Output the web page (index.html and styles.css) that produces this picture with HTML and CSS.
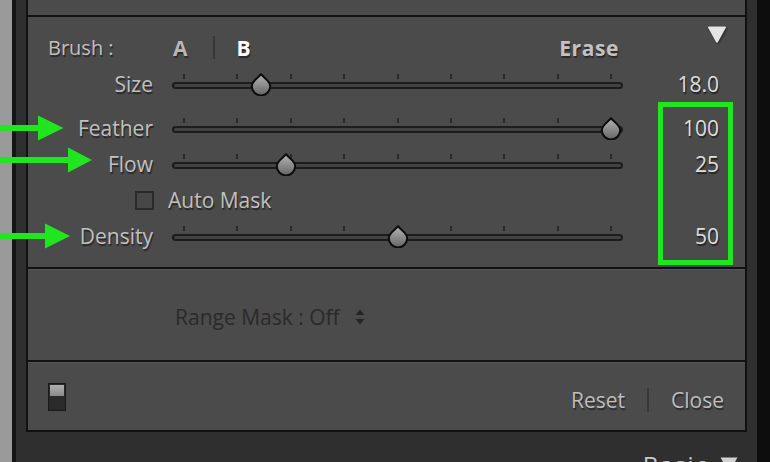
FILE: index.html
```html
<!DOCTYPE html>
<html>
<head>
<meta charset="utf-8">
<title>Brush panel</title>
<link rel="stylesheet" href="styles.css">
</head>
<body>
<div class="screen">
  <div class="edge-light"></div>
  <div class="edge-dark"></div>
  <div class="workspace">
    <div class="panel">
      <div class="section section-top"></div>

      <div class="section brush">
        <div class="brush-head">
          <span class="brush-title">Brush :</span>
          <span class="tab">A</span>
          <span class="tab-sep"></span>
          <span class="tab active">B</span>
          <span class="erase">Erase</span>
          <svg class="disclosure" viewBox="0 0 20 19" width="20" height="19"><path d="M2 1.5 H18 Q19.5 1.5 18.7 3 L11 17 Q10 18.5 9 17 L1.3 3 Q0.5 1.5 2 1.5 Z" fill="#e4e4e4"/></svg>
        </div>

        <div class="row">
          <span class="label">Size</span>
          <div class="slider" style="--v:0.18">
            <div class="ticks"><i></i><i></i><i></i><i></i><i></i><i></i><i></i><i></i><i></i></div>
            <div class="track"></div>
            <svg class="thumb" viewBox="0 0 22 23" width="22" height="23"><use href="#drop"/></svg>
          </div>
          <span class="value">18.0</span>
        </div>

        <div class="row row-feather">
          <span class="label">Feather</span>
          <div class="slider" style="--v:1">
            <div class="ticks"><i></i><i></i><i></i><i></i><i></i><i></i><i></i><i></i><i></i></div>
            <div class="track"></div>
            <svg class="thumb" viewBox="0 0 22 23" width="22" height="23"><use href="#drop"/></svg>
          </div>
          <span class="value">100</span>
        </div>

        <div class="row">
          <span class="label">Flow</span>
          <div class="slider" style="--v:0.24">
            <div class="ticks"><i></i><i></i><i></i><i></i><i></i><i></i><i></i><i></i><i></i></div>
            <div class="track"></div>
            <svg class="thumb" viewBox="0 0 22 23" width="22" height="23"><use href="#drop"/></svg>
          </div>
          <span class="value">25</span>
        </div>

        <div class="check-row">
          <span class="checkbox"></span>
          <span class="check-label">Auto Mask</span>
        </div>

        <div class="row">
          <span class="label">Density</span>
          <div class="slider" style="--v:0.5">
            <div class="ticks"><i></i><i></i><i></i><i></i><i></i><i></i><i></i><i></i><i></i></div>
            <div class="track"></div>
            <svg class="thumb" viewBox="0 0 22 23" width="22" height="23"><use href="#drop"/></svg>
          </div>
          <span class="value">50</span>
        </div>
      </div>

      <div class="section range">
        <span class="range-text">Range Mask : Off</span>
        <svg class="updown" viewBox="0 0 10 16" width="10" height="16"><path d="M5 0.5 L9.5 6 H0.5 Z M5 15.5 L9.5 10 H0.5 Z" fill="#262626"/></svg>
      </div>

      <div class="section footer">
        <span class="toggle"><span class="toggle-top"></span></span>
        <div class="actions">
          <span class="action">Reset</span>
          <span class="action-sep"></span>
          <span class="action">Close</span>
        </div>
      </div>
    </div>

    <div class="next-head">
      <span class="next-title">Basic</span>
      <svg class="next-tri" viewBox="0 0 18 16" width="18" height="16"><path d="M0.5 0.5 H17.5 L9 15.5 Z" fill="#d2d2d2"/></svg>
    </div>
  </div>

  <svg class="arrows" viewBox="0 0 100 260" width="100" height="260">
    <rect x="0" y="125" width="40" height="6" fill="#1fe61f"/>
    <polygon points="38,115.5 63.5,128 38,140.5" fill="#1fe61f"/>
    <rect x="0" y="157" width="70" height="6" fill="#1fe61f"/>
    <polygon points="68,147.5 92,160 68,172.5" fill="#1fe61f"/>
    <rect x="0" y="233" width="47" height="6" fill="#1fe61f"/>
    <polygon points="45,223.5 70,236 45,248.5" fill="#1fe61f"/>
  </svg>
  <div class="value-box"></div>
</div>

<svg width="0" height="0" class="defs">
  <defs>
    <linearGradient id="dropfill" x1="0" y1="0" x2="0" y2="1">
      <stop offset="0" stop-color="#b4b4b4"/>
      <stop offset="1" stop-color="#666666"/>
    </linearGradient>
    <symbol id="drop" viewBox="0 0 22 23">
      <path d="M11 1.2 C13.5 4.5 20.2 7.8 20.2 13.2 A9.2 9.2 0 0 1 1.8 13.2 C1.8 7.8 8.5 4.5 11 1.2 Z" fill="url(#dropfill)" stroke="#0c0c0c" stroke-width="2" stroke-linejoin="round"/>
    </symbol>
  </defs>
</svg>
</body>
</html>
```

FILE: styles.css
```css
* { box-sizing: border-box; }
html, body { margin: 0; padding: 0; }
body {
  width: 770px;
  height: 462px;
  overflow: hidden;
  background: #0d0d0d;
  font-family: "Open Sans", "DejaVu Sans", sans-serif;
}
.defs { position: absolute; width: 0; height: 0; }

.screen { position: relative; display: flex; height: 462px; overflow: hidden; }
.edge-light { width: 12px; flex: none; background: #9a9a9a; }
.edge-dark { width: 4px; flex: none; background: #151515; }
.workspace { width: 741px; flex: none; background: #2f2f2f; padding: 0 10px; }

.panel {
  background: #4b4b4b;
  border-left: 2px solid #111;
  border-right: 2px solid #111;
}
.section { border-bottom: 2px solid #111; }
.section-top { height: 17px; }

/* Brush section */
.brush { padding: 12px 0 13px; }
.brush-head {
  display: flex;
  align-items: center;
  height: 37px;
  padding: 0 18px 0 20px;
}
.brush-title {
  width: 125px;
  font-size: 20px;
  color: #c0c0c0;
  text-shadow: 1px 2px 1px rgba(0,0,0,0.5);
}
.tab {
  font-size: 21px;
  font-weight: 700;
  color: #b8b8b8;
  text-shadow: 1px 2px 1px rgba(0,0,0,0.45);
}
.tab.active { color: #ffffff; }
.tab-sep {
  width: 2px;
  height: 23px;
  background: #363636;
  margin: 0 22px 0 25px;
}
.erase {
  margin-left: auto;
  font-size: 21px;
  font-weight: 700;
  letter-spacing: 0.6px;
  color: #c2c2c2;
  text-shadow: 1px 2px 1px rgba(0,0,0,0.45);
}
.disclosure {
  align-self: flex-start;
  margin: -4px 0 0 88px;
  filter: drop-shadow(1px 1px 1px rgba(0,0,0,0.5));
}

.row {
  display: grid;
  grid-template-columns: 144px 451px 1fr;
  align-items: center;
  height: 36px;
}
.row-feather { margin-top: 8px; }
.label {
  padding-right: 19px;
  text-align: right;
  font-size: 21px;
  color: #c0c0c0;
  text-shadow: 1px 2px 1px rgba(0,0,0,0.5);
}
.value {
  padding-right: 26px;
  text-align: right;
  font-size: 21px;
  color: #dedede;
  text-shadow: 1px 2px 1px rgba(0,0,0,0.55);
}

.slider { position: relative; height: 20px; }
.ticks {
  display: flex;
  justify-content: space-between;
  height: 5px;
  padding: 0 11px;
}
.ticks i { display: block; width: 2px; height: 5px; background: #2a2a2a; }
.track {
  margin-top: 3px;
  height: 7px;
  border: 2px solid #1c1c1c;
  border-radius: 4px;
  background: #424242;
}
.thumb {
  position: absolute;
  top: -1px;
  left: calc(12px + 427px * var(--v) - 11px);
}

.check-row {
  display: flex;
  align-items: center;
  height: 36px;
  padding-left: 107px;
}
.checkbox {
  width: 19px;
  height: 19px;
  border: 2px solid #2a2a2a;
  background: #474747;
  margin-right: 14px;
}
.check-label {
  font-size: 21px;
  color: #c0c0c0;
  text-shadow: 1px 2px 1px rgba(0,0,0,0.5);
}

/* Range mask */
.range {
  display: flex;
  align-items: center;
  height: 93px;
  padding: 4px 0 0 147px;
  border-top: 1px solid #555;
}
.range-text {
  font-size: 21px;
  color: #2a2a2a;
}
.updown { margin-left: 15px; }

/* Footer */
.footer {
  display: flex;
  align-items: center;
  height: 70px;
  padding: 0 21px 0 20px;
  border-top: 1px solid #555;
}
.toggle {
  display: flex;
  flex-direction: column;
  width: 18px;
  height: 28px;
  border: 1px solid #1a1a1a;
  background: #2a2a2a;
  padding: 1px;
}
.toggle-top {
  height: 11px;
  background: linear-gradient(#b0b0b0, #8a8a8a);
}
.actions {
  margin-left: auto;
  display: flex;
  align-items: center;
  padding-top: 6px;
}
.action {
  font-size: 21px;
  color: #bdbdbd;
  text-shadow: 1px 2px 1px rgba(0,0,0,0.45);
}
.action-sep {
  width: 2px;
  height: 24px;
  background: #383838;
  margin: 0 22px 0 22px;
}

/* Next panel header */
.next-head {
  display: flex;
  align-items: flex-start;
  justify-content: flex-end;
  padding: 21px 9px 0 0;
}
.next-title {
  font-size: 24px;
  line-height: 24px;
  letter-spacing: 1.5px;
  color: #c8c8c8;
}
.next-tri { margin: 4px 0 0 12px; }

/* Annotations */
.arrows { position: absolute; left: 0; top: 0; }
.value-box {
  position: absolute;
  left: 658px;
  top: 102px;
  width: 75px;
  height: 163px;
  border: 5px solid #1fe61f;
}
```
